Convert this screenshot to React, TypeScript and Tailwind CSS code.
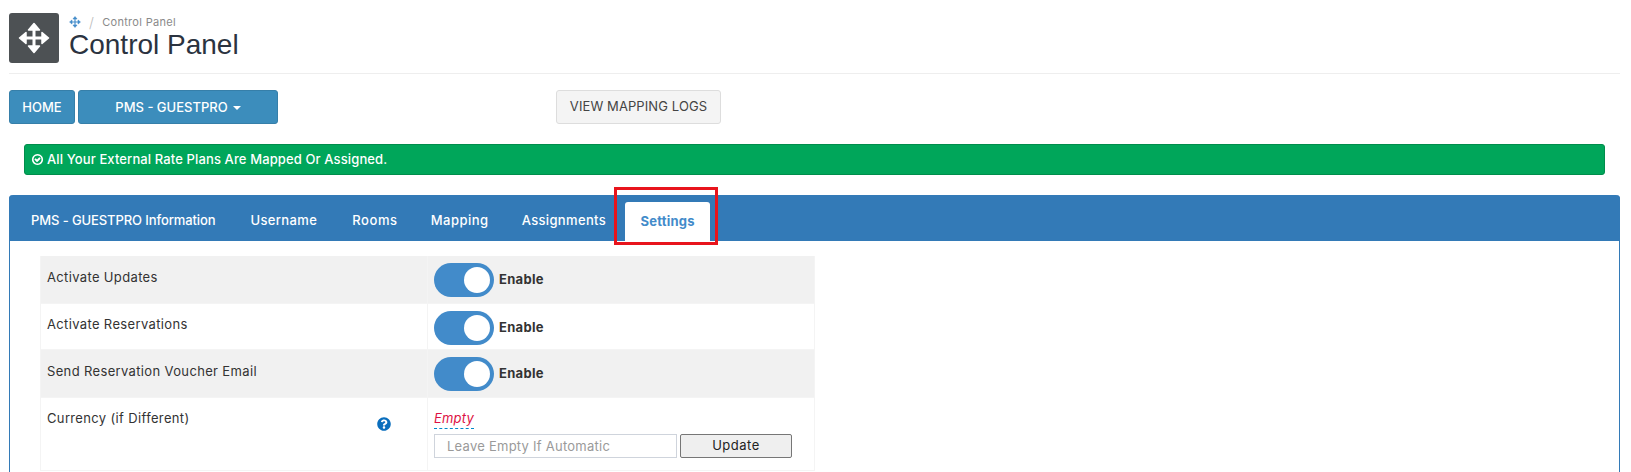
import React from 'react';
import { FaQuestionCircle } from 'react-icons/fa';

const tabs = [
    { label: 'PMS - GUESTPRO Information', className: 'ml-[22px] tracking-[-0.1px]' },
    { label: 'Username', className: 'ml-[35px] tracking-[0.35px]' },
    { label: 'Rooms', className: 'ml-[35px] tracking-[0.6px]' },
    { label: 'Mapping', className: 'ml-[33px] tracking-[0.5px]' },
    { label: 'Assignments', className: 'ml-[33px] tracking-[0.35px]' },
];

// four-way move arrow: rounded heads joined by a thin cross
const MoveIcon = ({ className }: { className: string }) => (
    <svg viewBox="0 0 32 32" fill="currentColor" stroke="currentColor" strokeWidth="1.5" strokeLinejoin="round" className={className}>
        <path d="M16 1.5 L21.5 8 H10.5 Z" />
        <path d="M16 30.5 L21.5 24 H10.5 Z" />
        <path d="M1.5 16 L8 10.5 V21.5 Z" />
        <path d="M30.5 16 L24 10.5 V21.5 Z" />
        <path d="M14.5 8 H17.5 V24 H14.5 Z M8 14.5 H24 V17.5 H8 Z" stroke="none" />
    </svg>
);

const CheckIcon = ({ className }: { className: string }) => (
    <svg viewBox="0 0 1792 1792" fill="currentColor" className={className}>
        <path d="M1299 813l-422 422q-19 19-45 19t-45-19l-294-294q-19-19-19-45t19-45l102-102q19-19 45-19t45 19l147 147 275-275q19-19 45-19t45 19l102 102q19 19 19 45t-19 45zm141 83q0-148-73-273t-198-198-273-73-273 73-198 198-73 273 73 273 198 198 273 73 273-73 198-198 73-273zm224 0q0 209-103 385.5t-279.5 279.5-385.5 103-385.5-103-279.5-279.5-103-385.5 103-385.5 279.5-279.5 385.5-103 385.5 103 279.5 279.5 103 385.5z" />
    </svg>
);

const Toggle = () => (
    <div className="flex items-center">
        <div className="flex h-[34px] w-[60px] items-center justify-end rounded-full bg-[#428bca] pr-1">
            <div className="h-[26px] w-[26px] rounded-full bg-white" />
        </div>
        <span className="ml-[5px] text-[13px] font-bold tracking-[0.3px] text-[#333]">Enable</span>
    </div>
);

const ToggleRow = ({ label, shaded, height, pad }: { label: string; shaded?: boolean; height: string; pad: string }) => (
    <div className={`flex border-b border-[#f4f4f4] ${height} ${shaded ? 'bg-[#f1f1f1]' : 'bg-white'}`}>
        <div className={`w-[387px] border-r border-[#f4f4f4] pl-[6px] text-[13px] leading-5 tracking-[0.35px] text-[#333] ${pad}`}>{label}</div>
        <div className="flex flex-1 items-start pl-[6px] pt-[7px]">
            <Toggle />
        </div>
    </div>
);

export default function App() {
    return (
        <div className="h-[472px] w-[1631px] overflow-hidden bg-white font-['Inter','Liberation_Sans',sans-serif]">
            <div className="mx-[9px] w-[1611px]">
                <div className="flex h-[74px] items-start border-b border-[#eeeeee] pt-[13px]">
                    <div className="flex h-[50px] w-[50px] items-center justify-center rounded-[3px] bg-[#4d5154]">
                        <MoveIcon className="h-8 w-8 text-white" />
                    </div>
                    <div className="ml-[10px]">
                        <div className="flex h-[18px] items-center text-[11px] tracking-[0.3px] text-[#8a8a8a]">
                            <MoveIcon className="h-3 w-3 text-[#428bca]" />
                            <span className="ml-[8px] text-[14px] font-light text-[#bbb]">/</span>
                            <span className="ml-[8px]">Control Panel</span>
                        </div>
                        <h1 className="font-['Liberation_Sans',sans-serif] text-[28px] leading-[28px] font-normal text-[#2b3340]">Control Panel</h1>
                    </div>
                </div>

                <div className="mt-4 flex h-[34px] text-[13px] font-medium">
                    <button className="w-[66px] rounded-[3px] border border-[#367fa9] bg-[#3c8dbc] pt-px text-white">HOME</button>
                    <button className="ml-[3px] flex w-[200px] items-center justify-center rounded-[3px] border border-[#367fa9] bg-[#3c8dbc] pt-px text-white">
                        PMS - GUESTPRO
                        <span className="ml-[5px] h-0 w-0 border-x-4 border-t-4 border-x-transparent border-t-white" />
                    </button>
                    <button className="ml-[278px] w-[165px] rounded-[3px] border border-[#dddddd] bg-[#f4f4f4] font-normal tracking-[0.1px] text-[#444]">VIEW MAPPING LOGS</button>
                </div>

                <div className="mx-[15px] mt-5 flex h-[31px] items-center rounded-[3px] border border-[#008d4c] bg-[#00a65a] pl-[6px] text-[13px] font-medium tracking-[0.12px] text-white">
                    <CheckIcon className="mr-[3px] h-[13px] w-[13px]" />
                    All Your External Rate Plans Are Mapped Or Assigned.
                </div>

                <div className="mt-5 rounded-t-[4px] border-x border-[#337ab7]">
                    <div className="-mx-px flex h-[46px] items-end rounded-t-[4px] bg-[#337ab7] text-[13px] font-medium text-white">
                        {tabs.map((tab) => (
                            <span key={tab.label} className={`${tab.className} self-center pt-[6px]`}>{tab.label}</span>
                        ))}
                        <div className="relative ml-[19px] flex h-[39px] w-[85px] items-center justify-center rounded-t-[3px] bg-white font-bold tracking-[0.2px] text-[#428bca]">
                            Settings
                            <div className="absolute -left-[11px] -right-[8px] -top-[15px] h-[58px] border-[3px] border-[#e8141c]" />
                        </div>
                    </div>

                    <div className="h-[240px] pl-[30px] pt-[15px]">
                        <div className="w-[775px] border-x border-[#f4f4f4]">
                            <ToggleRow label="Activate Updates" shaded height="h-[48px]" pad="pt-[11px]" />
                            <ToggleRow label="Activate Reservations" height="h-[46px]" pad="pt-[10px]" />
                            <ToggleRow label="Send Reservation Voucher Email" shaded height="h-[48px]" pad="pt-[11px]" />
                            <div className="flex h-[73px] border-b border-[#f4f4f4]">
                                <div className="flex w-[387px] items-start justify-between border-r border-[#f4f4f4] pl-[6px] pt-[10px] pr-[36px] text-[13px] leading-5 tracking-[0.35px] text-[#333]">
                                    <span>Currency (if Different)</span>
                                    <FaQuestionCircle className="mt-[9px] h-[14px] w-[14px] text-[#0a6ebd]" />
                                </div>
                                <div className="flex-1 pl-[6px] pt-[10px]">
                                    <span className="block w-fit border-b border-dashed border-[#0088cc] text-[13px] leading-[20px] tracking-[0.2px] italic text-[#dd1144]">Empty</span>
                                    <div className="mt-[5px] flex">
                                        <input
                                            readOnly
                                            placeholder="Leave Empty If Automatic"
                                            className="h-6 w-[243px] border border-[#cfd4dc] bg-white pl-[12px] text-[13px] tracking-[0.25px] text-[#333] outline-none placeholder:text-[#9a9a9a]"
                                        />
                                        <button className="ml-[3px] h-6 w-[112px] rounded-[2px] border border-[#767676] bg-[#efefef] text-[13px] font-normal tracking-[0.5px] text-[#222]">Update</button>
                                    </div>
                                </div>
                            </div>
                        </div>
                    </div>
                </div>
            </div>
        </div>
    );
}
